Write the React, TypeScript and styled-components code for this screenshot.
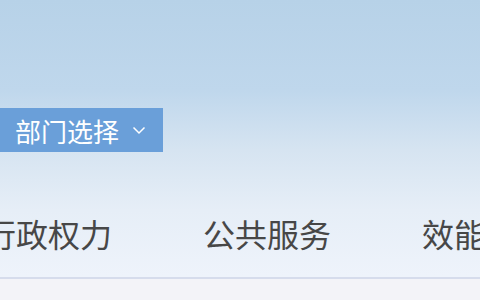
import styled, { createGlobalStyle } from "styled-components"

const GlobalStyle = createGlobalStyle`
  html, body {
    margin: 0;
    padding: 0;
    width: 480px;
    height: 300px;
    overflow: hidden;
  }
  body {
    font-family: "Noto Sans CJK SC", "Noto Sans", sans-serif;
  }
`

const tabs = ['行政权力', '公共服务', '效能监察']

function App() {
  return <Page>
    <GlobalStyle />
    <Header>
      <DeptButton>
        部门选择
        <svg width="14" height="9" viewBox="0 0 14 9" fill="none">
          <path d="M1.5 1.5 L7 7 L12.5 1.5" stroke="#fff" strokeWidth="1.5" />
        </svg>
      </DeptButton>
    </Header>
    <TabBar>
      {tabs.map((t) => <Tab key={t}>{t}</Tab>)}
    </TabBar>
    <Body />
  </Page>
}

export default App

const Page = styled.div`
  width: 480px;
  height: 300px;
  display: flex;
  flex-direction: column;
  background: linear-gradient(180deg, #b7d2e8 0%, #bfd7ec 30%, #d6e4f1 50%, #e6eef7 70%, #eef3fb 92%);
`

const Header = styled.div`
  padding-top: 108px;
  display: flex;
`

const DeptButton = styled.button`
  width: 163px;
  height: 44px;
  border: none;
  background: #6a9fd9;
  color: #fff;
  font-family: "Noto Sans CJK SC", sans-serif;
  font-size: 26px;
  display: flex;
  align-items: center;
  gap: 13px;
  padding: 0 0 0 15px;
  box-sizing: border-box;
`

const TabBar = styled.div`
  display: flex;
  gap: 91px;
  margin-left: -16px;
  padding: 58px 0 21px;
  border-bottom: 2px solid #d6dcec;
  flex: none;
`

const Tab = styled.div`
  flex: none;
  font-size: 32px;
  line-height: 46px;
  color: #474747;
  white-space: nowrap;
`

const Body = styled.div`
  flex: 1;
  background: #f3f3f8;
`
